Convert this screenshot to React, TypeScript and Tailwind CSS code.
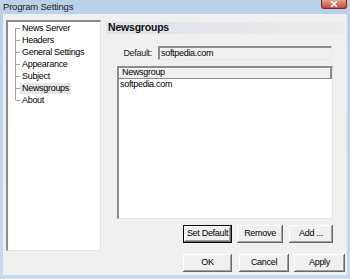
const treeItems = [
  "News Server",
  "Headers",
  "General Settings",
  "Appearance",
  "Subject",
  "Newsgroups",
  "About",
];

const btn =
  "flex items-center justify-center bg-[#f0f0f0] text-black shadow-[inset_-1px_-1px_#696969,inset_1px_1px_#ffffff,inset_-2px_-2px_#a0a0a0]";

function TreeLines() {
  // vertical spine with one stub per item
  return (
    <svg width="12" height="84" className="shrink-0">
      <line x1="7.5" y1="6" x2="7.5" y2="78" stroke="#a0a0a0" />
      {treeItems.map((_, i) => (
        <line key={i} x1="7.5" y1={6.5 + i * 12} x2="12" y2={6.5 + i * 12} stroke="#a0a0a0" />
      ))}
    </svg>
  );
}

export default function App() {
  return (
    <div
      className="relative flex h-[279px] w-[350px] flex-col overflow-hidden bg-gradient-to-b from-[#b9d1ea] to-[#c6d9ee] text-[9px] tracking-[-0.3px] text-black"
      style={{ fontFamily: '"Liberation Sans", Arial, sans-serif' }}
    >
      {/* Title bar */}
      <div className="flex h-[14px] shrink-0 items-center pl-[3px] text-[9.5px] tracking-[-0.2px] text-[#1e1e1e]">
        Program Settings
      </div>
      <div className="absolute right-[3px] top-0 flex h-[9px] w-[26px] items-center justify-center rounded-b-[3px] border border-t-0 border-[#7a2a20] bg-gradient-to-b from-[#e0a08e] to-[#c34a35]">
        <svg width="8" height="6" viewBox="0 0 8 6">
          <path d="M1 0 L7 6 M7 0 L1 6" stroke="#ffffff" strokeWidth="1.6" />
        </svg>
      </div>

      {/* Client area */}
      <div className="mx-[3px] mb-[4px] flex flex-1 flex-col bg-[#f0f0f0]">
        <div className="flex pt-[6px]">
          {/* Tree */}
          <div className="ml-[3px] h-[231px] w-[95px] shrink-0 border-b border-l-2 border-r border-t-2 border-b-[#e3e3e3] border-l-[#8c8c8c] border-r-[#e3e3e3] border-t-[#8c8c8c] bg-white">
            <div className="flex">
              <TreeLines />
              <div className="flex flex-col">
                {treeItems.map((t) => (
                  <div key={t} className="flex h-[12px] items-center">
                    <span
                      className={`px-[2px] leading-[11px] ${t === "Newsgroups" ? "bg-[#e6e6e6]" : ""}`}
                    >
                      {t}
                    </span>
                  </div>
                ))}
              </div>
            </div>
          </div>

          {/* Right panel */}
          <div className="ml-[5px] flex flex-1 flex-col pt-[2px]">
            <div className="flex h-[12px] w-[239px] items-center bg-gradient-to-r from-[#dfe3ea] to-[#ececec] pl-[2px] text-[10.5px] font-bold tracking-[-0.2px] text-[#111]">
              Newsgroups
            </div>

            <div className="mt-[11px] flex items-center">
              <div className="w-[46px] pt-[2px] text-right text-[#222]">Default:</div>
              <div className="ml-[6px] flex h-[14px] w-[174px] items-center border-b border-l-2 border-r border-t-2 border-b-[#e8e8e8] border-l-[#8c8c8c] border-r-[#e8e8e8] border-t-[#8c8c8c] bg-[#f0f0f0] pl-[1px]">
                softpedia.com
              </div>
            </div>

            {/* List view */}
            <div className="ml-[11px] mt-[5px] flex h-[153px] w-[216px] flex-col border-b border-l-2 border-r border-t-2 border-b-[#e3e3e3] border-l-[#8c8c8c] border-r-[#e3e3e3] border-t-[#8c8c8c] bg-white">
              <div className="flex h-[11px] items-center border-b border-r-2 border-b-[#8c8c8c] border-r-[#8c8c8c] bg-[#f0f0f0] pl-[3px] shadow-[inset_1px_1px_#ffffff]">
                Newsgroup
              </div>
              <div className="mt-[1px] flex h-[11px] items-center pl-[1px]">softpedia.com</div>
            </div>
          </div>
        </div>

        {/* Newsgroup buttons */}
        <div className="ml-[180px] mt-[-26px] flex gap-[5px]">
          <div className={`${btn} h-[18px] w-[49px] border border-black`}>Set Default</div>
          <div className={`${btn} h-[18px] w-[46px]`}>Remove</div>
          <div className={`${btn} ml-[1px] h-[18px] w-[44px]`}>Add ...</div>
        </div>

        {/* Dialog buttons */}
        <div className="ml-[180px] mt-[11px] flex">
          <div className={`${btn} h-[18px] w-[49px]`}>OK</div>
          <div className={`${btn} ml-[7px] h-[18px] w-[50px]`}>Cancel</div>
          <div className={`${btn} ml-[5px] h-[18px] w-[51px]`}>Apply</div>
        </div>
      </div>
    </div>
  );
}
